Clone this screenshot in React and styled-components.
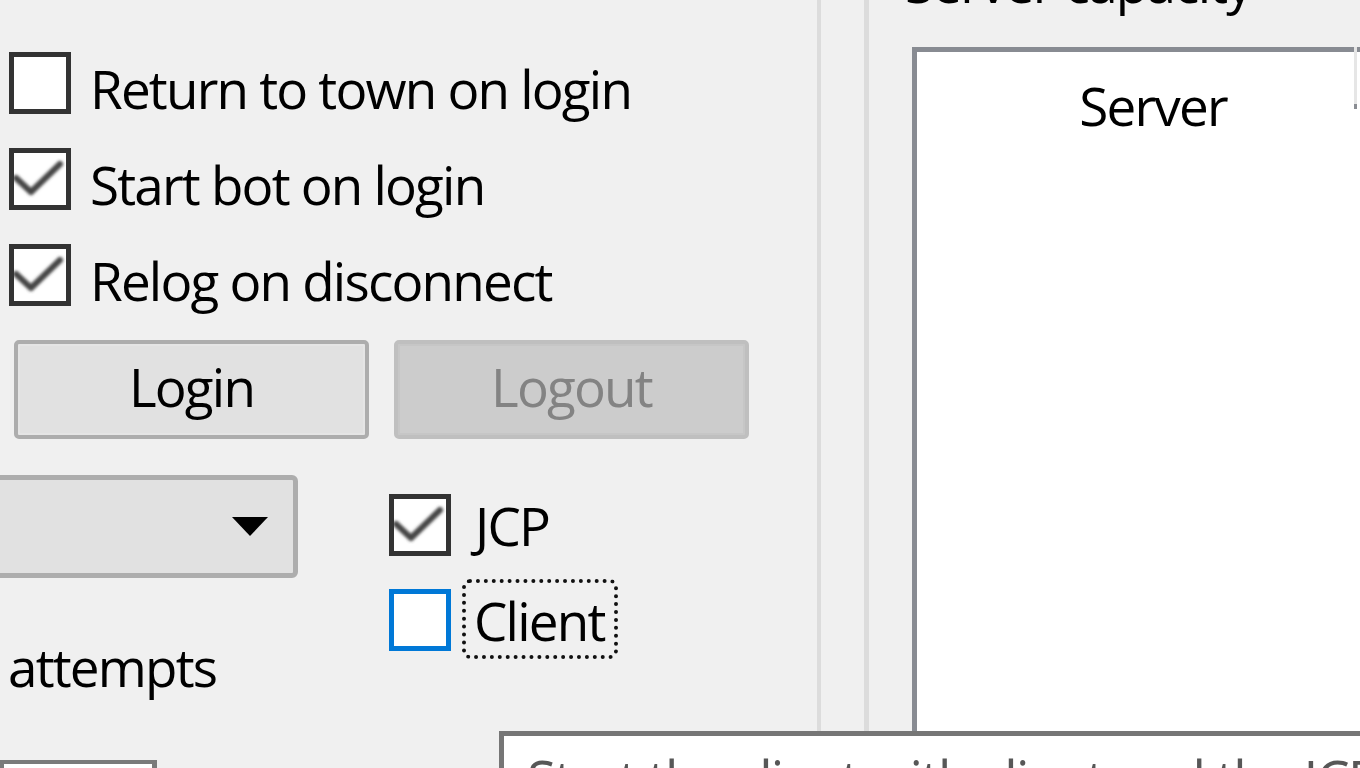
import React from 'react';
import styled, { createGlobalStyle } from 'styled-components';

const GlobalStyle = createGlobalStyle`
  html, body {
    margin: 0;
    padding: 0;
    background: #f0f0f0;
  }
  body {
    font-family: "Open Sans", "Noto Sans", sans-serif;
    color: #000;
  }
`;

const Window = styled.div`
  position: relative;
  width: 1360px;
  height: 768px;
  overflow: hidden;
  display: flex;
  background: #f0f0f0;
  font-size: 53px;
  line-height: 1;
  letter-spacing: -1.8px;
`;

const LeftPane = styled.div`
  width: 817px;
  flex-shrink: 0;
  display: flex;
  flex-direction: column;
  padding-top: 52px;
  box-sizing: border-box;
`;

const CheckRow = styled.label`
  display: flex;
  align-items: flex-start;
  gap: ${(p) => p.$gap ?? 19}px;
  margin-left: ${(p) => p.$left ?? 9}px;
  margin-bottom: ${(p) => p.$after ?? 33}px;
`;

const Box = styled.span`
  width: 62px;
  height: 62px;
  box-sizing: border-box;
  flex-shrink: 0;
  border: 5px solid ${(p) => (p.$focus ? '#0078d7' : '#333333')};
  background: #fff;
  display: flex;
  align-items: center;
  justify-content: center;
`;

const Label = styled.span`
  margin-top: ${(p) => p.$top ?? 10}px;
  white-space: nowrap;
  position: relative;
`;

const FocusRing = styled.span`
  position: absolute;
  left: -12px;
  right: -13px;
  top: -15px;
  bottom: -12px;
  border: 4px dotted #111;
  border-radius: 8px;
`;

const ButtonRow = styled.div`
  display: flex;
  gap: 25px;
  margin-left: 14px;
`;

const Button = styled.button`
  width: 355px;
  height: 99px;
  box-sizing: border-box;
  font: inherit;
  letter-spacing: inherit;
  border: 4px solid ${(p) => (p.disabled ? '#bfbfbf' : '#adadad')};
  border-radius: 5px;
  background: ${(p) => (p.disabled ? '#cccccc' : '#e1e1e1')};
  color: ${(p) => (p.disabled ? '#838383' : '#000')};
  padding: 0 0 6px;
  box-shadow: inset 0 0 0 2px ${(p) => (p.disabled ? '#c6c6c6' : '#e5e5e5')};
`;

const MidRow = styled.div`
  display: flex;
  margin-top: 36px;
`;

const MidLeft = styled.div`
  width: 389px;
  flex-shrink: 0;
  display: flex;
  flex-direction: column;
`;

const Dropdown = styled.div`
  width: 318px;
  height: 103px;
  margin-left: -20px;
  box-sizing: border-box;
  border: 5px solid #adadad;
  border-radius: 6px;
  background: #e1e1e1;
  display: flex;
  align-items: center;
  justify-content: flex-end;
  padding-right: 25px;
`;

const Caption = styled.div`
  margin-top: 62px;
  margin-left: 8px;
`;

const MidRight = styled.div`
  display: flex;
  flex-direction: column;
  padding-top: 19px;
`;

const TextField = styled.div`
  margin-top: 67px;
  width: 157px;
  height: 40px;
  box-sizing: border-box;
  border: 4px solid #7a7a7a;
  border-right-width: 5px;
  background: #fff;
`;

const Splitter = styled.div`
  width: 52px;
  flex-shrink: 0;
  box-sizing: border-box;
  border-left: 4px solid #dcdcdc;
  border-right: 5px solid #dcdcdc;
`;

const RightPane = styled.div`
  flex: 1;
  display: flex;
  flex-direction: column;
  padding-left: 43px;
  min-width: 0;
`;

const GroupTitle = styled.div`
  margin-top: -44px;
  margin-left: -7px;
  height: 91px;
  white-space: nowrap;
`;

const ListBox = styled.div`
  flex: 1;
  margin-right: -40px;
  border: 5px solid #888b92;
  border-bottom: none;
  background: #fff;
  display: flex;
`;

const Header = styled.div`
  width: 440px;
  height: 62px;
  display: flex;
  justify-content: center;
  padding-top: 27px;
  padding-left: 32px;
  box-sizing: border-box;
  position: relative;
`;

const HeaderDivider = styled.span`
  position: absolute;
  right: 0;
  top: -5px;
  width: 3px;
  height: 62px;
  background: #e6e6e6;
  &::after {
    content: '';
    position: absolute;
    left: 0;
    bottom: 0;
    width: 3px;
    height: 5px;
    background: #8a8d93;
  }
`;

const Tooltip = styled.div`
  position: absolute;
  left: 499px;
  top: 731px;
  width: 1000px;
  height: 120px;
  box-sizing: border-box;
  border: 5px solid #767676;
  background: #fff;
  padding: 16px 0 0 23px;
  color: #575757;
  white-space: nowrap;
`;

const Check = () => (
  <svg width="52" height="52" viewBox="0 0 52 52">
    <defs>
      <filter id="soft" x="-20%" y="-20%" width="140%" height="140%">
        <feGaussianBlur stdDeviation="1.4" />
      </filter>
    </defs>
    <polyline
      points="2,25 17,39 46,11"
      fill="none"
      stroke="#444"
      strokeWidth="6"
      strokeLinecap="round"
      strokeLinejoin="round"
      filter="url(#soft)"
    />
  </svg>
);

const Arrow = () => (
  <svg width="36" height="20" viewBox="0 0 36 20">
    <polygon points="0,0 36,0 18,19" fill="#000" />
  </svg>
);

const Option = ({ checked, focus, labelTop, children, ...rest }) => (
  <CheckRow {...rest}>
    <Box $focus={focus}>{checked && <Check />}</Box>
    <Label $top={labelTop}>{children}</Label>
  </CheckRow>
);

export default function App() {
  return (
    <>
      <GlobalStyle />
      <Window>
        <LeftPane>
          <Option>Return to town on login</Option>
          <Option checked>Start bot on login</Option>
          <Option checked>Relog on disconnect</Option>
          <ButtonRow>
            <Button>Login</Button>
            <Button disabled>Logout</Button>
          </ButtonRow>
          <MidRow>
            <MidLeft>
              <Dropdown>
                <Arrow />
              </Dropdown>
              <Caption>attempts</Caption>
              <TextField />
            </MidLeft>
            <MidRight>
              <Option checked labelTop={5} $left={0} $gap={24} $after={33}>
                JCP
              </Option>
              <CheckRow $left={0} $gap={23} $after={0}>
                <Box $focus />
                <Label $top={5}>
                  <FocusRing />
                  Client
                </Label>
              </CheckRow>
            </MidRight>
          </MidRow>
        </LeftPane>
        <Splitter />
        <RightPane>
          <GroupTitle>Server capacity</GroupTitle>
          <ListBox>
            <Header>
              Server
              <HeaderDivider />
            </Header>
          </ListBox>
        </RightPane>
        <Tooltip>Start the client with client and the JCP enabled</Tooltip>
      </Window>
    </>
  );
}
